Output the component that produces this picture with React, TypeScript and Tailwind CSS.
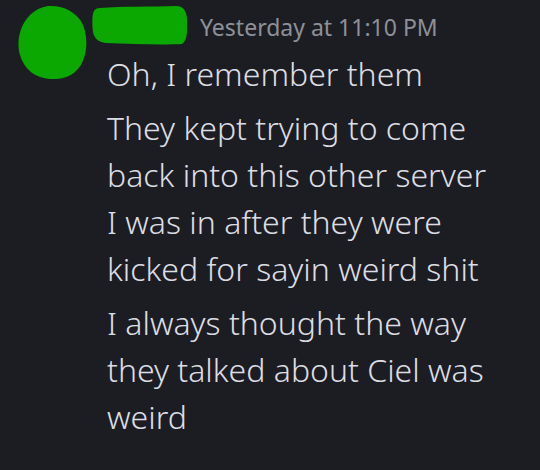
export default function App () {
  const paragraphs = [
    ['Oh, I remember them'],
    ['They kept trying to come', 'back into this other server', 'I was in after they were', 'kicked for sayin weird shit'],
    ['I always thought the way', 'they talked about Ciel was', 'weird']
  ]

  return (
    <div className="w-[540px] h-[470px] bg-[#1c1d22] overflow-hidden flex" style={{ fontFamily: '"Noto Sans", sans-serif' }}>
      {/* avatar, scribbled over */}
      <div className="w-[92px] shrink-0 pl-[18px] pt-[5px]">
        <svg width="70" height="74" viewBox="0 0 70 74">
          <path d="M30 1 C44 0 56 6 63 16 C70 28 70 46 64 58 C58 70 46 75 32 74 C17 73 6 64 2 50 C-2 36 2 20 12 10 C17 5 23 2 30 1 Z" fill="#0aa800" />
        </svg>
      </div>
      <div className="flex flex-col pt-[6px]">
        <div className="flex items-start gap-[12px] h-[44px]">
          <svg width="96" height="40" viewBox="0 0 96 40">
            <path d="M8 2 C30 0 60 1 84 0 C92 0 95 6 95 14 C95 24 96 34 90 38 C70 39 40 38 14 37 C6 36 2 32 1 26 C0 18 0 8 2 5 C3 3 5 2 8 2 Z" fill="#0aa800" />
          </svg>
          <span className="text-[#8e9099] text-[23px] leading-[30px] mt-[6px]">Yesterday at 11:10 PM</span>
        </div>
        <div className="text-[#dcdde2] text-[32px] leading-[47px] font-light pl-[15px]">
          {paragraphs.map((p, i) => (
            <div key={i} className="mb-[7px]">
              {p.map((l, j) => <div key={j}>{l}</div>)}
            </div>
          ))}
        </div>
      </div>
    </div>
  )
}
